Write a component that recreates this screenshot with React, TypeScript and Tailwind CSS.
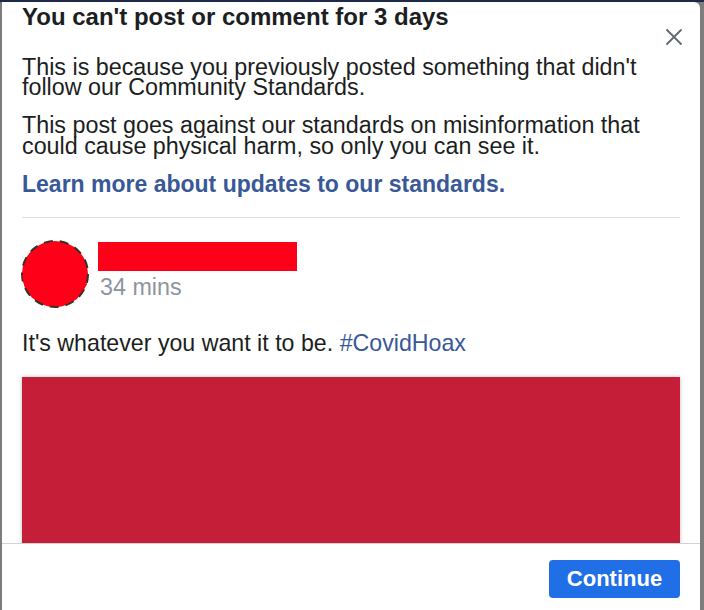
import React from "react";

export default function App() {
  return (
    <div
      className="relative w-[704px] h-[610px] overflow-hidden bg-[#7d7d7d] flex flex-col"
      style={{ fontFamily: '"Liberation Sans", Arial, Helvetica, sans-serif' }}
    >
      <div className="h-[2px] w-full bg-[#1d2a4b] shrink-0" />
      <div className="ml-[2px] w-[698px] flex-1 bg-white rounded-tr-[6px] flex flex-col overflow-hidden relative">
        <button className="absolute right-[16px] top-[25px] w-[20px] h-[20px] flex items-center justify-center">
          <svg width="18" height="18" viewBox="0 0 18 18">
            <path d="M2 2 L16 16 M16 2 L2 16" stroke="#606770" strokeWidth="1.8" strokeLinecap="round" />
          </svg>
        </button>
        <div className="flex-1 overflow-hidden px-5 pt-[3px] text-[#1c1e21]">
          <h1 className="text-[24px] leading-[24px] font-bold">You can't post or comment for 3 days</h1>
          <p className="mt-[28px] text-[23.3px] leading-[20px]">
            This is because you previously posted something that didn't follow our Community Standards.
          </p>
          <p className="mt-[18px] text-[23.3px] leading-[20.5px] pr-10">
            This post goes against our standards on misinformation that could cause physical harm, so only you can see it.
          </p>
          <div className="mt-[18px] text-[23px] leading-[20px] font-bold text-[#385898]">
            Learn more about updates to our standards.
          </div>
          <div className="mt-[23px] h-px bg-[#dadde1]" />
          <div className="mt-[21px] flex items-start">
            <svg width="70" height="70" viewBox="0 0 70 70" className="-ml-[2px] shrink-0">
              <circle cx="35" cy="35" r="33" fill="#ff0019" stroke="#333322" strokeWidth="2" strokeDasharray="9 7" />
              <polygon points="6,24 16,14 20,16 30,3 38,5 44,4 52,12 60,18 63,30 67,46 60,52 57,60 48,64 40,67 30,66 20,62 13,58 6,48 2,38" fill="#ff0019" />
            </svg>
            <div className="ml-[8px] flex flex-col">
              <div className="mt-[3px] w-[199px] h-[29px] bg-[#ff0019]" />
              <div className="mt-[4px] ml-[2px] text-[23.3px] leading-[24px] text-[#8d949e]">34 mins</div>
            </div>
          </div>
          <p className="mt-[22px] text-[23.2px] leading-[24px]">
            It's whatever you want it to be. <span className="text-[#385898]">#CovidHoax</span>
          </p>
          <div className="mt-[22px] h-[260px] bg-[#c41e38] shadow-[0_0_4px_rgba(0,0,0,0.25)]" />
        </div>
        <div className="shrink-0 h-[67px] border-t border-[#cfd2d6] flex justify-end items-start pt-[16px] pr-[20px]">
          <button className="w-[131px] h-[38px] rounded-[4px] bg-[#216fe6] text-white text-[22px] font-bold leading-[38px]">
            Continue
          </button>
        </div>
      </div>
    </div>
  );
}
